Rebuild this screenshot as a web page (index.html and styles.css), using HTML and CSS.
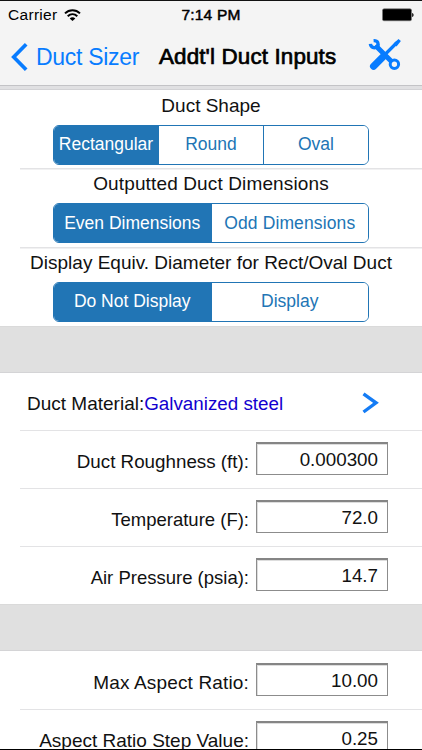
FILE: index.html
```html
<!DOCTYPE html>
<html lang="en">
<head>
<meta charset="utf-8">
<title>Addt'l Duct Inputs</title>
<link rel="stylesheet" href="styles.css">
</head>
<body>
<div class="screen">
  <header class="header">
    <div class="status">
      <div class="carrier"><span class="carrier-name">Carrier</span>
        <svg class="wifi" width="17" height="13" viewBox="0 0 17 13"><g fill="none" stroke="#000" stroke-width="2"><path d="M1 4.4C5.3.3 11.7.3 16 4.4"/><path d="M3.7 7.3c2.8-2.6 6.8-2.6 9.6 0"/></g><path d="M8.5 12 5.7 9.4c1.6-1.5 4-1.5 5.6 0z"/></svg>
      </div>
      <span class="time">7:14 PM</span>
      <svg class="battery" width="32" height="14" viewBox="0 0 32 14"><rect x=".5" y=".8" width="29" height="12" rx="1.5" fill="#000" stroke="#777" stroke-width=".6"/><path d="M30.2 5v4c1.8-.5 1.8-3.5 0-4z"/></svg>
    </div>
    <nav class="nav">
      <a class="back"><svg width="17" height="28" viewBox="0 0 17 28"><path d="M15.2 1.3 2.7 14l12.5 12.7" fill="none" stroke="#087cff" stroke-width="3.7"/></svg><span class="back-text">Duct Sizer</span></a>
      <h1 class="title">Addt'l Duct Inputs</h1>
      <svg class="tools" width="34" height="34" viewBox="0 0 34 34"><g fill="none" stroke="#087cff" stroke-linecap="round"><path d="M9 9 22.5 22.5" stroke-width="5"/><path d="M5.6 2.6C10 2.4 11 5.6 9.4 8.8 6.2 10.6 2.8 9.6 2.4 5.9" stroke-width="3.4" stroke-linecap="butt"/><circle cx="26.4" cy="26.2" r="4.2" stroke-width="3"/><path d="M16 17.5 28.5 5" stroke-width="3.2"/><path d="M5.6 28.2 14.8 19" stroke-width="7.2"/></g><path d="M25.6 5.6 30.5 1l2.4 2.1-4.4 5.4z" fill="#087cff"/></svg>
    </nav>
  </header>
  <main>
    <section class="choices">
      <div class="choice"><h2 class="label">Duct Shape</h2>
        <div class="segments"><button class="seg on">Rectangular</button><button class="seg">Round</button><button class="seg">Oval</button></div></div>
      <div class="choice"><h2 class="label dims">Outputted Duct Dimensions</h2>
        <div class="segments"><button class="seg on">Even Dimensions</button><button class="seg odd">Odd Dimensions</button></div></div>
      <div class="choice"><h2 class="label">Display Equiv. Diameter for Rect/Oval Duct</h2>
        <div class="segments"><button class="seg on">Do Not Display</button><button class="seg">Display</button></div></div>
    </section>
    <div class="band"></div>
    <section>
      <div class="row material"><span class="mat">Duct Material:</span><span class="steel">Galvanized steel</span>
        <svg class="chev" width="17" height="22" viewBox="0 0 17 22"><path d="M1.5 1.8 14 10.8 1.5 20" fill="none" stroke="#147cf5" stroke-width="3.4"/></svg></div>
      <div class="row"><label class="name rough">Duct Roughness (ft):</label><div class="field">0.000300</div></div>
      <div class="row"><label class="name">Temperature (F):</label><div class="field">72.0</div></div>
      <div class="row"><label class="name">Air Pressure (psia):</label><div class="field">14.7</div></div>
    </section>
    <div class="band"></div>
    <section>
      <div class="row"><label class="name max">Max Aspect Ratio:</label><div class="field">10.00</div></div>
      <div class="row"><label class="name step">Aspect Ratio Step Value:</label><div class="field">0.25</div></div>
    </section>
  </main>
</div>
</body>
</html>
```
FILE: styles.css
```css
* { box-sizing: border-box; }
body { margin: 0; background: #fff; color: #111; font-family: "Liberation Sans", Arial, sans-serif; font-size: 18px; }
.screen { height: 750px; overflow: hidden; border-top: 1px solid #111; border-bottom: 1px solid #000; }
h1, h2 { margin: 0; font-weight: normal; }
svg { display: block; flex: none; }
.header { height: 85px; background: #f4f4f4; border-bottom: 1px solid #c3c3c6; }
.status { display: grid; grid-template-columns: 1fr auto 1fr; height: 28px; align-items: center; padding: 0 8px; color: #000; }
.carrier { display: flex; align-items: center; gap: 7px; font-size: 15.5px; letter-spacing: .3px; }
.time { font-size: 15.5px; -webkit-text-stroke: .5px #000; letter-spacing: .2px; }
.battery { justify-self: end; }
.nav { display: flex; height: 56px; padding-left: 11px; align-items: center; color: #000; }
.back { display: flex; align-items: center; color: #087cff; width: 148px; gap: 8px; font-size: 23px; letter-spacing: -.3px; white-space: nowrap; }
.title { font-size: 22.4px; -webkit-text-stroke: .7px #000; letter-spacing: .14px; width: 209px; white-space: nowrap; }
.tools { margin-top: -4px; }
.choices { padding-top: 3.5px; background: linear-gradient(#e0e0e2 3px, #d2d2d5 3px 4px, #fff 4px); }
.choice { height: 78.7px; padding: 3px 53px 0; }
.choice + .choice { background: linear-gradient(#e3e3e5, #e3e3e5) 20px 0 / 402px 1.5px no-repeat; }
.label { height: 32px; line-height: 26px; font-size: 19px; display: flex; justify-content: center; white-space: nowrap; }
.dims { letter-spacing: .13px; }
.segments { display: flex; height: 40px; border: 1.5px solid #2175b5; border-radius: 6px; overflow: hidden; }
.seg { flex: 1 1 0; border: 0; padding: 0; background: #fff; color: #2175b5; font: 17.5px/37px "Liberation Sans", Arial, sans-serif; white-space: nowrap; }
.seg + .seg { border-left: 1px solid #2175b5; }
.seg.on { background: #2175b5; color: #fff; }
.odd { letter-spacing: .12px; }
.band { height: 47px; background: #e0e0e0; border-top: 1px solid #dadada; border-bottom: 1px solid #d4d4d6; }
.row { display: flex; height: 58px; align-items: flex-start; padding: 11.5px 34px 0 0; }
.row + .row { background: linear-gradient(#e3e3e5, #e3e3e5) 20px 0 / 402px 1px no-repeat; }
.name { width: 249px; text-align: right; font-size: 18.5px; line-height: 40px; white-space: nowrap; }
.rough { font-size: 18.8px; }
.max { font-size: 19px; letter-spacing: .15px; }
.step { font-size: 19px; }
.field { width: 132px; height: 33px; margin-left: 7px; border: 1.5px solid #8c8c8c; border-top-width: 2px; border-top-color: #858585; box-shadow: inset 1px 1px 0 #ddd; padding-right: 9px; text-align: right; font-size: 18.8px; line-height: 31px; }
.material { padding: 5px 43px 0 27px; height: 57.5px; align-items: center; line-height: 22px; }
.mat { font-size: 19px; }
.steel { color: #1200cf; font-size: 18.8px; }
.chev { margin-left: auto; margin-top: -1px; }
```
